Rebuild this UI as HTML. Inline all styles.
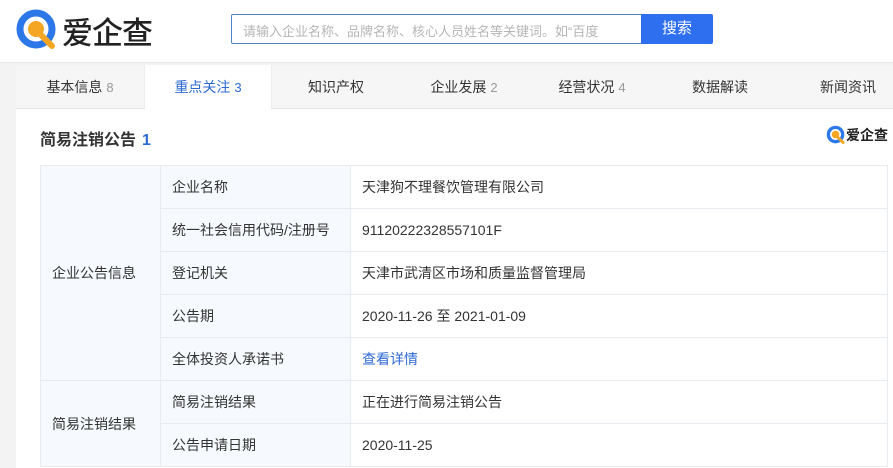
<!DOCTYPE html>
<html><head><meta charset="utf-8"><style>
*{margin:0;padding:0;box-sizing:border-box}
body{width:893px;height:468px;overflow:hidden;background:#f3f3f3;font-family:"Liberation Sans","Noto Sans CJK SC",sans-serif;color:#333;position:relative}
.hdr{position:absolute;left:0;top:0;width:893px;height:63px;background:#fff;border-bottom:1px solid #e8e8e8}
.logo{position:absolute;left:16px;top:9px}
.lt{position:absolute;left:62px;top:8px;font-size:31px;color:#222;letter-spacing:-1px;font-weight:500}
.sb{position:absolute;left:231px;top:14px;width:411px;height:30px;border:1px solid #4f7fc9;border-radius:2px 0 0 2px;font-size:13px;color:#b5b5b5;padding:6px 0 0 11px;white-space:nowrap;overflow:hidden}
.btn{position:absolute;left:641px;top:14px;width:72px;height:30px;background:#2e6ff0;color:#fff;font-size:15px;text-align:center;line-height:30px;border-radius:0 2px 2px 0}
.main{position:absolute;left:16px;top:65px;width:877px;height:403px;background:#fff}
.tabs{position:absolute;left:0;top:0;width:877px;height:44px;background:#f6f6f6;border-bottom:1px solid #e6e6e6}
.tab{position:absolute;top:0;width:128px;height:44px;line-height:44px;text-align:center;font-size:14px;color:#333}
.tab span{color:#999;font-size:13px}
.tab.a{background:#fff;color:#2d6ad6;border-left:1px solid #eee;border-right:1px solid #eee;height:45px}
.tab.a span{color:#2d6ad6}
.ttl{position:absolute;left:24px;top:61px;font-size:16px;font-weight:bold;color:#333}
.ttl b{color:#2d6ad6;margin-left:6px}
.sl{position:absolute;left:810px;top:60px}
table{position:absolute;left:24px;top:100px;width:848px;border-collapse:collapse;font-size:14px}
td{border:1px solid #e8ecf0;height:43px;padding-left:11px;color:#333}
td.k{background:#f6f9fd}
a{color:#2d6ad6;text-decoration:none}
</style></head><body>
<div class="hdr">
<svg class="logo" width="42" height="42" viewBox="0 0 42 42"><circle cx="20" cy="20" r="16" fill="none" stroke="#2c78e8" stroke-width="7"/><circle cx="20" cy="20" r="8" fill="#f5a623"/><path d="M24 25 L36 37" stroke="#f5a623" stroke-width="6" stroke-linecap="round"/></svg>
<div class="lt">爱企查</div>
<div class="sb">请输入企业名称、品牌名称、核心人员姓名等关键词。如“百度</div>
<div class="btn">搜索</div>
</div>
<div class="main">
<div class="tabs">
<div class="tab" style="left:0">基本信息 <span>8</span></div>
<div class="tab a" style="left:128px">重点关注 <span>3</span></div>
<div class="tab" style="left:256px">知识产权</div>
<div class="tab" style="left:384px">企业发展 <span>2</span></div>
<div class="tab" style="left:512px">经营状况 <span>4</span></div>
<div class="tab" style="left:640px">数据解读</div>
<div class="tab" style="left:768px">新闻资讯</div>
</div>
<div class="ttl">简易注销公告<b>1</b></div>
<div class="sl"><svg width="20" height="20" viewBox="0 0 42 42" style="vertical-align:middle"><circle cx="20" cy="20" r="15" fill="none" stroke="#2c78e8" stroke-width="7"/><circle cx="20" cy="20" r="8" fill="#f5a623"/><path d="M24 25 L36 37" stroke="#f5a623" stroke-width="6" stroke-linecap="round"/></svg><span style="font-size:14px;vertical-align:middle;font-weight:bold;color:#222">爱企查</span></div>
<table>
<tr><td class="k" rowspan="5" style="width:120px">企业公告信息</td><td class="k" style="width:190px">企业名称</td><td>天津狗不理餐饮管理有限公司</td></tr>
<tr><td class="k">统一社会信用代码/注册号</td><td>91120222328557101F</td></tr>
<tr><td class="k">登记机关</td><td>天津市武清区市场和质量监督管理局</td></tr>
<tr><td class="k">公告期</td><td>2020-11-26 至 2021-01-09</td></tr>
<tr><td class="k">全体投资人承诺书</td><td><a>查看详情</a></td></tr>
<tr><td class="k" rowspan="2">简易注销结果</td><td class="k">简易注销结果</td><td>正在进行简易注销公告</td></tr>
<tr><td class="k">公告申请日期</td><td>2020-11-25</td></tr>
</table>
</div>
</body></html>
